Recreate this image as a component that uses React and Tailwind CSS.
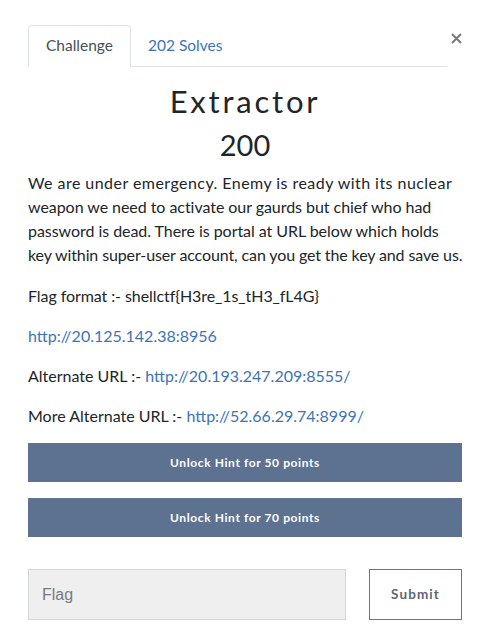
import React from "react";

export default function App() {
  return (
    <div className="w-[488px] h-[626px] bg-white text-[#212529] overflow-hidden font-['Lato',sans-serif]">
      <div className="pl-[28px] pr-[26px] pt-[25px]">
        <div className="flex items-start">
          <div className="flex-1 flex border-b border-[#dee2e6] h-[42px]">
            <div className="w-[103px] h-[42px] border border-[#dee2e6] border-b-white rounded-t-[4px] flex items-center justify-center text-[15.5px] text-[#495057] bg-white">
              Challenge
            </div>
            <div className="px-[17px] h-[41px] flex items-center text-[15.5px] text-[#3e74b4]">202 Solves</div>
          </div>
          <div className="w-[15px] flex justify-end pt-[8px]">
            <svg width="11" height="11" viewBox="0 0 11 11">
              <path d="M1 1 L10 10 M10 1 L1 10" stroke="#7a7a7a" strokeWidth="2" />
            </svg>
          </div>
        </div>

        <h2 className="text-center text-[31px] leading-[38px] tracking-[0.09em] font-normal mt-[15px] text-[#212529]">Extractor</h2>
        <h3 className="text-center text-[29px] leading-[34px] font-normal mt-[8px] text-[#212529]">200</h3>

        <div className="mt-[9px] text-[16px] leading-[24px] text-[#212529] whitespace-nowrap">
          <p>
            <span className="tracking-[0.45px]">We are under emergency. Enemy is ready with its nuclear</span><br />
            <span className="tracking-[-0.05px]">weapon we need to activate our gaurds but chief who had</span><br />
            <span className="tracking-[-0.05px]">password is dead. There is portal at URL below which holds</span><br />
            <span className="tracking-[-0.12px]">key within super-user account, can you get the key and save us.</span>
          </p>
          <p className="mt-[17px] tracking-[-0.08px]">Flag format :- shellctf{"{"}H3re_1s_tH3_fL4G{"}"}</p>
          <p className="mt-[16px]"><a className="text-[#3e74b4]">http://20.125.142.38:8956</a></p>
          <p className="mt-[16px]">Alternate URL :- <a className="text-[#3e74b4]">http://20.193.247.209:8555/</a></p>
          <p className="mt-[16px]">More Alternate URL :- <a className="text-[#3e74b4]">http://52.66.29.74:8999/</a></p>
        </div>

        <div className="mt-[15px] flex flex-col gap-[16px]">
          <button className="h-[39px] w-full bg-[#5c7290] text-white text-[12px] font-bold tracking-[0.05em]">Unlock Hint for 50 points</button>
          <button className="h-[39px] w-full bg-[#5c7290] text-white text-[12px] font-bold tracking-[0.05em]">Unlock Hint for 70 points</button>
        </div>

        <div className="mt-[32px] flex justify-between">
          <div className="w-[318px] h-[51px] bg-[#efefef] border border-[#d3d6da] flex items-center pl-[13px] text-[16px] text-[#767b80] font-['Liberation_Sans',sans-serif]">
            Flag
          </div>
          <button className="w-[93px] h-[51px] border border-[#6c757d] bg-white text-[#5f6670] text-[13.5px] font-bold tracking-[0.08em]">Submit</button>
        </div>
      </div>
    </div>
  );
}
